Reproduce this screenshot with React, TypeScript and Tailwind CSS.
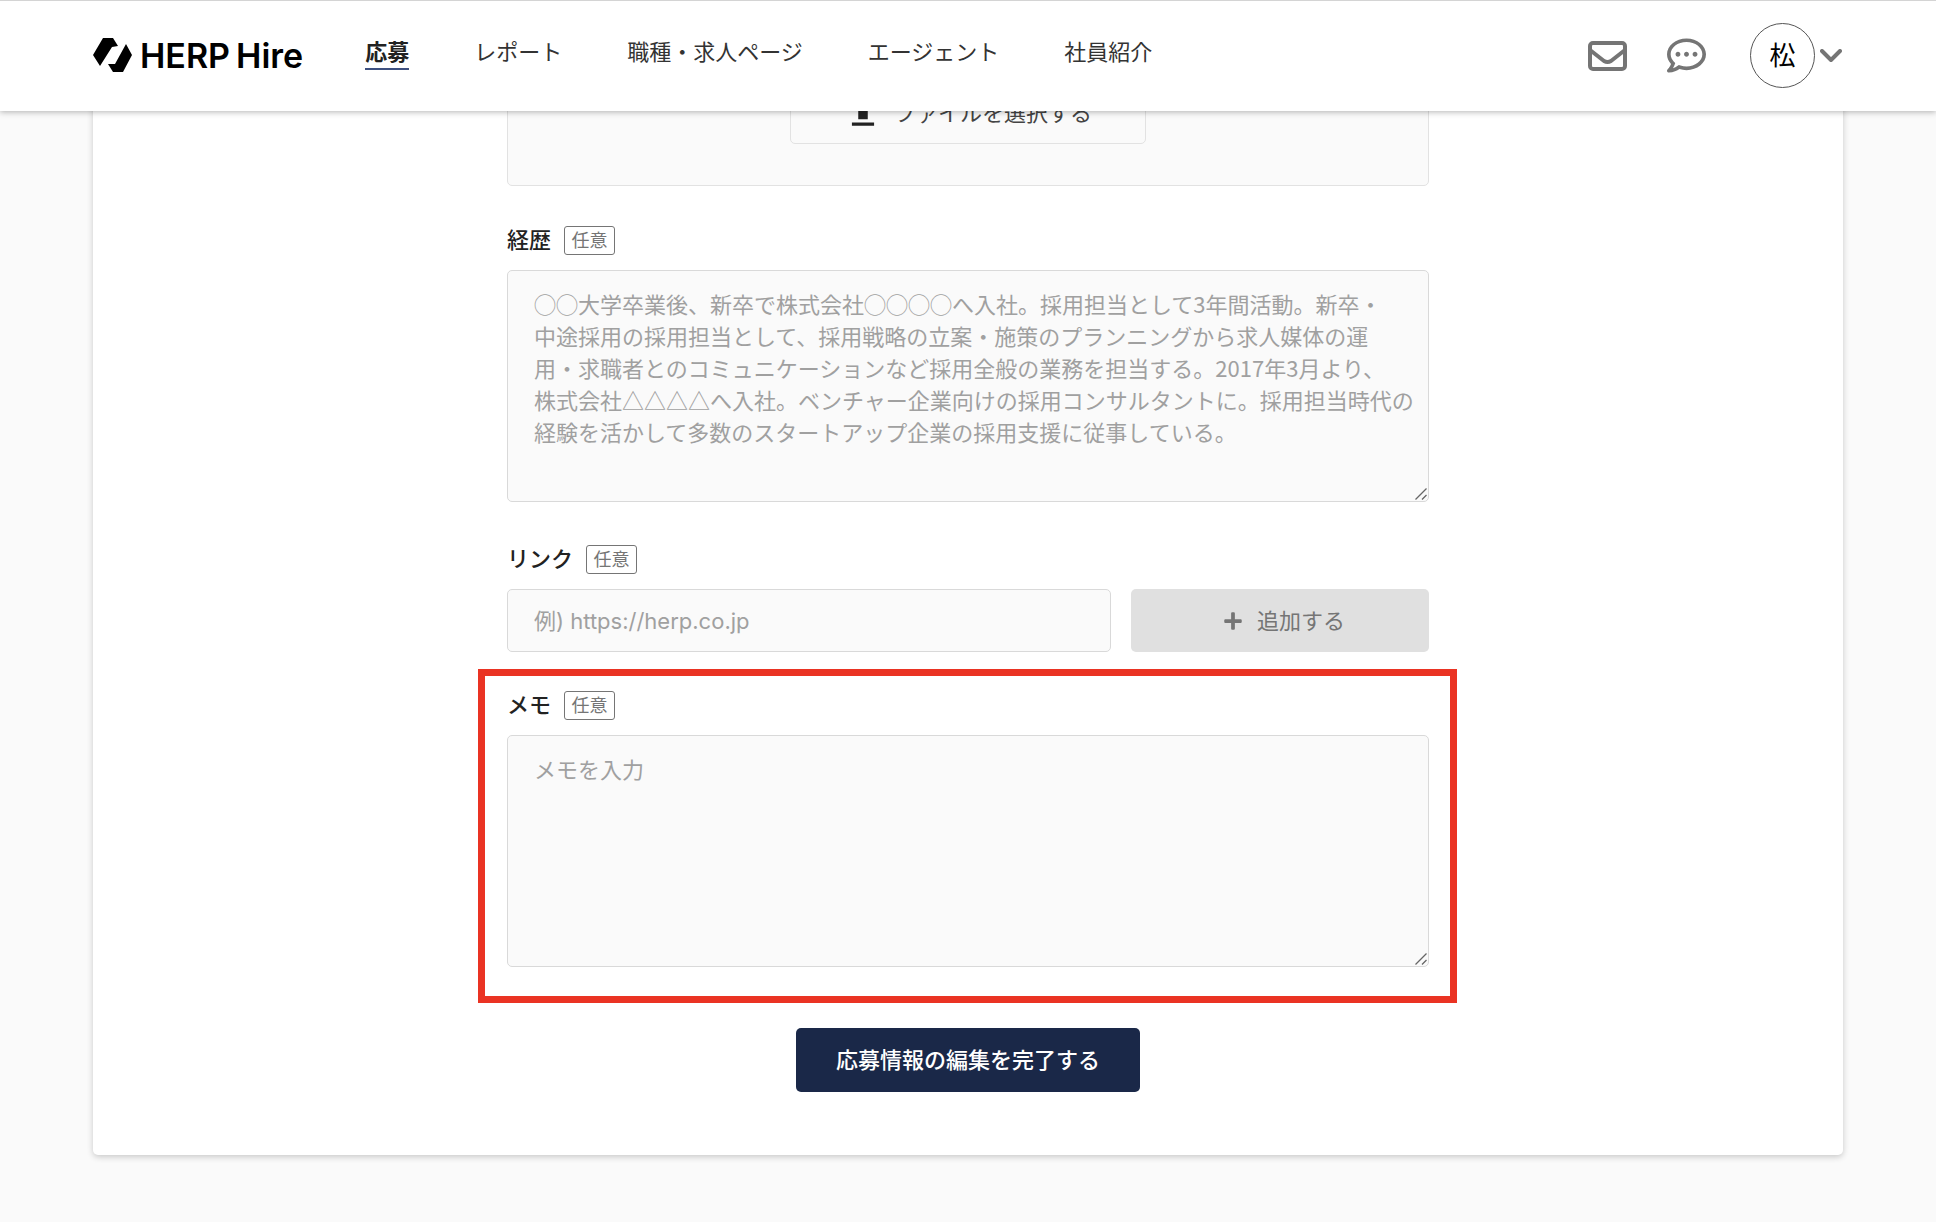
import { useState } from 'react';
import type { TextareaHTMLAttributes } from 'react';
import { FaPlus, FaRegCommentDots } from 'react-icons/fa';
import { MdUpload } from 'react-icons/md';

const NAV_ITEMS = ['応募', 'レポート', '職種・求人ページ', 'エージェント', '社員紹介'];

const CAREER_PLACEHOLDER = [
  '◯◯大学卒業後、新卒で株式会社◯◯◯◯へ入社。採用担当として3年間活動。新卒・',
  '中途採用の採用担当として、採用戦略の立案・施策のプランニングから求人媒体の運',
  '用・求職者とのコミュニケーションなど採用全般の業務を担当する。2017年3月より、',
  '株式会社△△△△へ入社。ベンチャー企業向けの採用コンサルタントに。採用担当時代の',
  '経験を活かして多数のスタートアップ企業の採用支援に従事している。',
].join('\n');

const fieldClass =
  'block w-full rounded-[5px] border border-[#d9d9d9] bg-[#fafafa] text-[22px] leading-8 text-[#333] placeholder:text-[#a0a0a0]';

function Logo() {
  return (
    <a href="#" className="flex items-center gap-2 text-black">
      <svg viewBox="0 0 39 35" className="h-[35px] w-[39px]" fill="currentColor" aria-hidden="true">
        <path d="M10 0h10l5 8-6 1L7 28 0 17z" />
        <path d="M33 6l6 11-9 17H20l-5-8h7z" />
      </svg>
      <span className="flex gap-1.5 text-[34px] leading-10 font-semibold">
        <span>HERP</span>
        <span>Hire</span>
      </span>
    </a>
  );
}

function Header() {
  return (
    <header className="sticky top-0 z-10 flex h-[111px] items-center border-t border-[#d4d4d4] bg-white pr-[94px] pb-px pl-[93px] shadow-[0_1px_6px_rgba(0,0,0,0.3)]">
      <Logo />
      <nav className="ml-[62px] flex gap-[65px] pb-1.5">
        {NAV_ITEMS.map((item, i) => (
          <a
            key={item}
            href="#"
            className={
              i === 0
                ? 'border-b-2 border-[#3d5080] text-[22px] leading-8 font-bold text-[#222]'
                : 'border-b-2 border-transparent text-[22px] leading-8 text-[#333]'
            }
          >
            {item}
          </a>
        ))}
      </nav>
      <div className="ml-auto flex items-center text-[#757575]">
        <button type="button" aria-label="メール" className="mr-10">
          <svg viewBox="0 0 39 30" className="h-[30px] w-[39px]" fill="none" stroke="currentColor" strokeWidth="4" strokeLinejoin="round">
            <rect x="2" y="2" width="35" height="26" rx="3" />
            <path d="M2 9l14 11q3.500 2 7 0L37 9" />
          </svg>
        </button>
        <button type="button" aria-label="メッセージ" className="mr-11">
          <FaRegCommentDots className="size-[39px]" />
        </button>
        <button type="button" aria-label="アカウント" className="flex items-center gap-[5px]">
          <span className="flex size-[65px] items-center justify-center rounded-full border border-[#555] text-[26px] leading-8 text-black">
            松
          </span>
          <svg viewBox="0 0 22 14" className="h-[14px] w-[22px]" fill="none" stroke="currentColor" strokeWidth="4" strokeLinecap="round" strokeLinejoin="round">
            <path d="M2 2l9 9 9-9" />
          </svg>
        </button>
      </div>
    </header>
  );
}

function FieldLabel({ htmlFor, text }: { htmlFor: string; text: string }) {
  return (
    <div className="mb-[15px] flex h-[29px] items-center gap-[13px]">
      <label htmlFor={htmlFor} className="pb-0.5 text-[22px] leading-7 font-medium text-[#222]">
        {text}
      </label>
      <span className="flex h-[29px] w-[51px] items-center justify-center rounded-[3px] border border-[#757575] text-[18px] leading-6 text-[#757575]">
        任意
      </span>
    </div>
  );
}

function TextArea(props: TextareaHTMLAttributes<HTMLTextAreaElement>) {
  return (
    <div className="relative">
      <textarea
        {...props}
        className={`${fieldClass} h-[232px] resize overflow-hidden py-4 pr-2 pl-[26px] font-['Noto_Sans_CJK_JP',sans-serif] [&::-webkit-resizer]:bg-transparent`}
      />
      <svg
        viewBox="0 0 12 12"
        className="pointer-events-none absolute right-0.5 bottom-0.5 size-3"
        fill="none"
        stroke="#666"
        strokeWidth="1.3"
        aria-hidden="true"
      >
        <path d="M0.500 11.500L11.500 0.500M7 11.500L11.500 7" />
      </svg>
    </div>
  );
}

export default function App() {
  const [career, setCareer] = useState('');
  const [link, setLink] = useState('');
  const [memo, setMemo] = useState('');

  return (
    <div className="min-h-screen bg-[#fafafa] font-[Inter,'Noto_Sans_CJK_JP',sans-serif]">
      <Header />
      {/* the card is scrolled partly under the header */}
      <main className="-mt-[51px] px-[93px] pb-[66px]">
        <form
          className="rounded-[5px] bg-white pb-[63px] shadow-[0_2px_6px_rgba(0,0,0,0.2)]"
          onSubmit={(e) => e.preventDefault()}
        >
          <div className="mx-auto max-w-[922px]">
            <div className="flex justify-center rounded-b-[5px] border border-[#e2e2e2] bg-[#fafafa] pt-5 pb-[41px]">
              <button
                type="button"
                className="flex h-[63px] w-[356px] items-center justify-center gap-3 rounded-[5px] border border-[#e2e2e2] text-[22px] leading-8 text-[#444]"
              >
                <MdUpload className="size-[38px] text-[#222]" />
                ファイルを選択する
              </button>
            </div>

            <section className="mt-10">
              <FieldLabel htmlFor="career" text="経歴" />
              <TextArea
                id="career"
                value={career}
                onChange={(e) => setCareer(e.target.value)}
                placeholder={CAREER_PLACEHOLDER}
              />
            </section>

            <section className="mt-[43px]">
              <FieldLabel htmlFor="link" text="リンク" />
              <div className="flex gap-5">
                <input
                  id="link"
                  type="text"
                  value={link}
                  onChange={(e) => setLink(e.target.value)}
                  placeholder="例) https://herp.co.jp"
                  className={`${fieldClass} h-[63px] min-w-0 flex-1 px-[26px]`}
                />
                <button
                  type="button"
                  className="flex h-[63px] w-[298px] items-center justify-center gap-[14px] rounded-[5px] bg-[#e0e0e0] pl-2 text-[22px] leading-8 text-[#757575]"
                >
                  <FaPlus className="size-5" />
                  追加する
                </button>
              </div>
            </section>

            <section className="relative mt-[39px]">
              <div className="pointer-events-none absolute -top-[22px] -right-7 -bottom-9 -left-[29px] border-7 border-[#ea3323]" />
              <FieldLabel htmlFor="memo" text="メモ" />
              <TextArea
                id="memo"
                value={memo}
                onChange={(e) => setMemo(e.target.value)}
                placeholder="メモを入力"
              />
            </section>

            <button
              type="submit"
              className="mx-auto mt-[61px] block h-16 w-[344px] rounded-[5px] bg-[#1a2848] text-[22px] leading-8 font-medium text-white"
            >
              応募情報の編集を完了する
            </button>
          </div>
        </form>
      </main>
    </div>
  );
}
